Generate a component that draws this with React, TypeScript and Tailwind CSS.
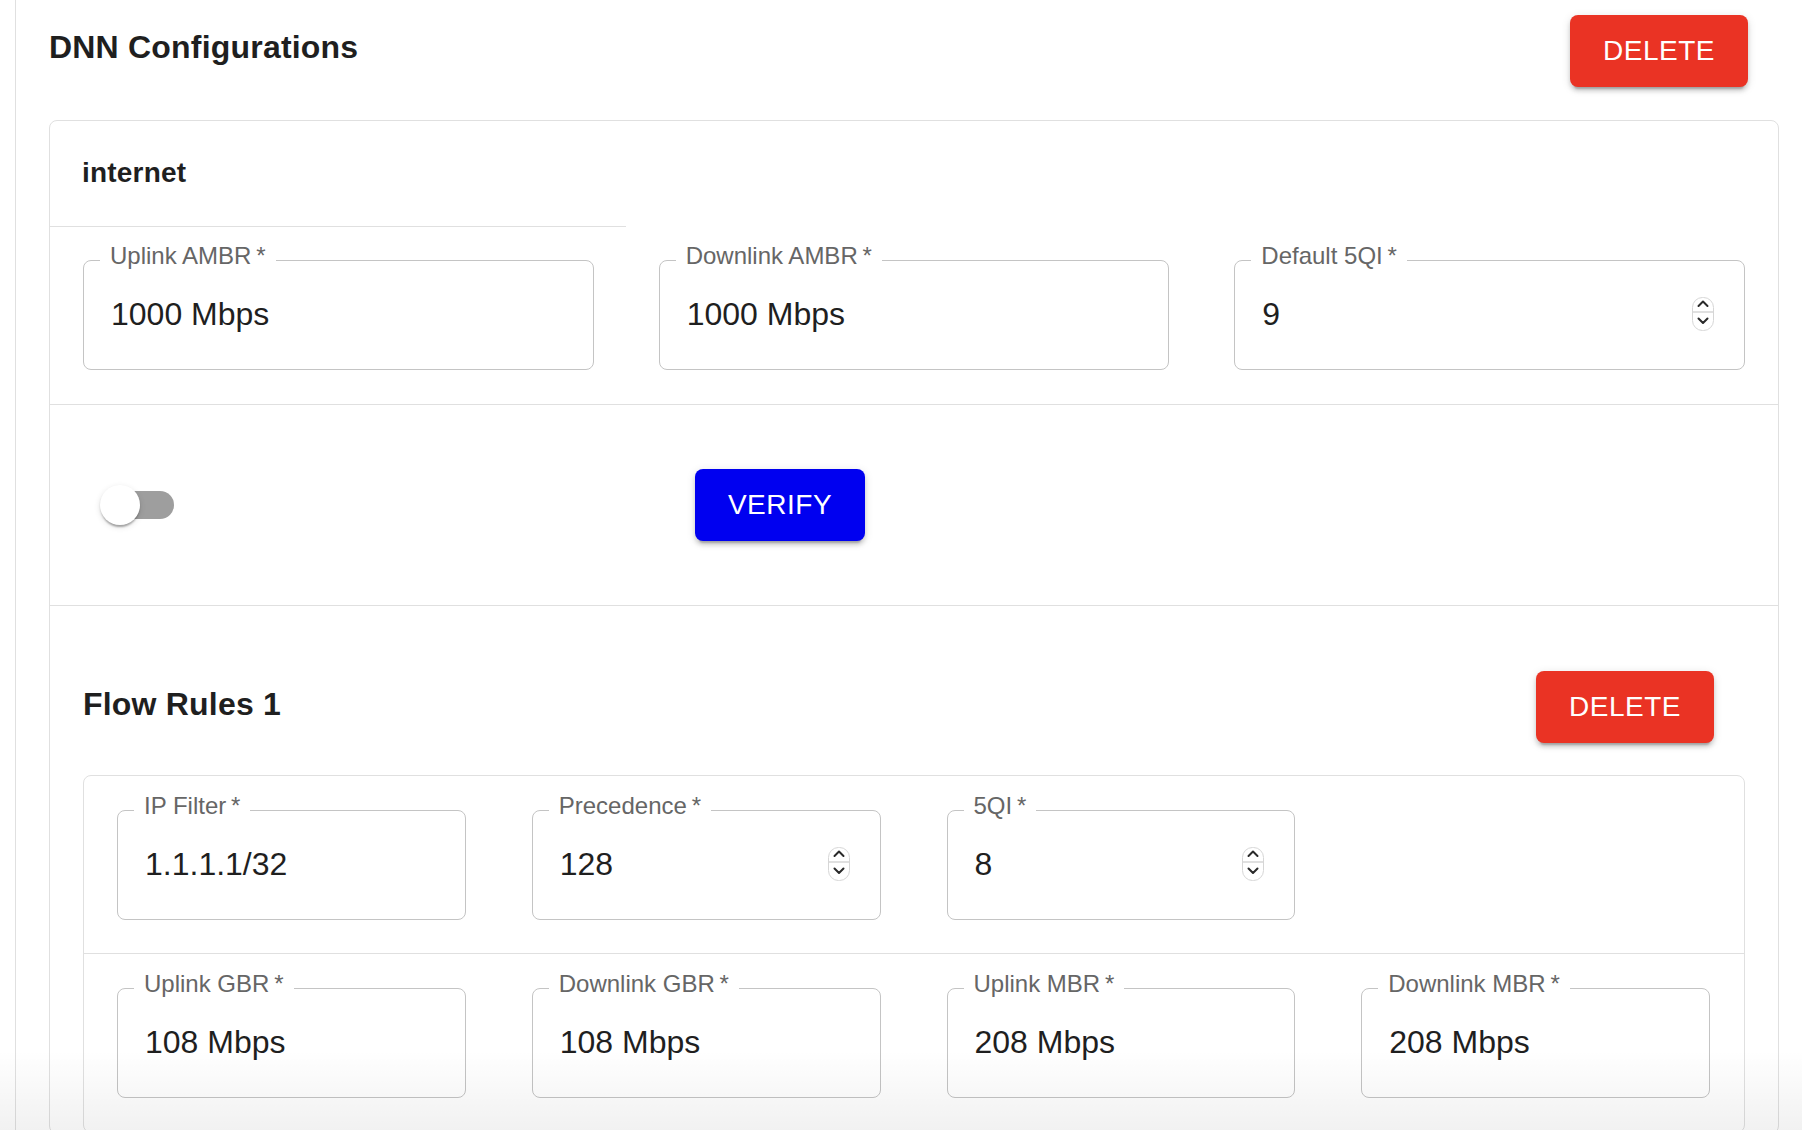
import React from "react";

const FONT = "font-['Liberation_Sans',Arial,Helvetica,sans-serif]";

function Spinner() {
  return (
    <svg width="22" height="34" viewBox="0 0 22 34" className="shrink-0">
      <rect x="0.5" y="0.5" width="21" height="33" rx="10" fill="#ffffff" stroke="#d6d6d6" />
      <line x1="1" y1="15" x2="21" y2="15" stroke="#d6d6d6" strokeWidth="1.5" />
      <path d="M6.5 9 L11 4.5 L15.5 9" stroke="#2a2a2a" strokeWidth="2" fill="none" strokeLinecap="round" strokeLinejoin="round" />
      <path d="M6.5 21.5 L11 26 L15.5 21.5" stroke="#2a2a2a" strokeWidth="2" fill="none" strokeLinecap="round" strokeLinejoin="round" />
    </svg>
  );
}

function Field({ label, value, spin = false }: { label: string; value: string; spin?: boolean }) {
  return (
    <div className="relative flex h-[110px] items-center justify-between rounded-[8px] border border-[#c4c4c4] pb-[2px] pl-[27px] pr-[30px]">
      <span className="absolute -top-[17px] left-[16px] bg-white px-[10px] text-[24px] leading-[24px] text-[#666666] whitespace-nowrap">
        {label}
        {"\u2009*"}
      </span>
      <span className="text-[32px] leading-[40px] text-[#1f1f1f]">{value}</span>
      {spin ? <Spinner /> : null}
    </div>
  );
}

const btnShadow =
  "shadow-[0_6px_2px_-4px_rgba(0,0,0,0.2),0_4px_4px_0_rgba(0,0,0,0.14),0_2px_10px_0_rgba(0,0,0,0.12)]";

function RedButton() {
  return (
    <button
      className={`flex h-[72px] w-[178px] items-center justify-center rounded-[8px] bg-[#ea3324] text-[28px] tracking-[0.5px] text-white ${btnShadow}`}
    >
      DELETE
    </button>
  );
}

export default function App() {
  return (
    <div className={`relative h-[1130px] w-full overflow-hidden bg-white ${FONT} text-[#1f1f1f]`}>
      <div className="ml-[15px] h-full border-l border-[#e0e0e0] pl-[33px] pr-[23px]">
        {/* header */}
        <div className="flex h-[120px] items-start justify-between pr-[31px]">
          <h1 className="mt-[27px] text-[32px] font-bold leading-[40px] tracking-[0.2px]">DNN Configurations</h1>
          <div className="mt-[15px]">
            <RedButton />
          </div>
        </div>

        {/* card */}
        <div className="rounded-[8px] border border-[#e0e0e0]">
          <div className="h-[106px] w-1/3 border-b border-[#e0e0e0] pl-[32px] pt-[32px]">
            <div className="text-[28px] font-bold leading-[40px] tracking-[0.2px]">internet</div>
          </div>

          <div className="grid grid-cols-3 gap-[65px] border-b border-[#e0e0e0] px-[33px] pb-[34px] pt-[33px]">
            <Field label="Uplink AMBR" value="1000 Mbps" />
            <Field label="Downlink AMBR" value="1000 Mbps" />
            <Field label="Default 5QI" value="9" spin />
          </div>

          <div className="flex h-[201px] items-center border-b border-[#e0e0e0] pl-[32px]">
            <div className="relative h-[76px] w-[116px] shrink-0">
              <div className="absolute left-[24px] top-[24px] h-[28px] w-[68px] rounded-full bg-[#9e9e9e]" />
              <div className="absolute left-[18px] top-[18px] h-[40px] w-[40px] rounded-full bg-white shadow-[0_4px_2px_-2px_rgba(0,0,0,0.2),0_2px_2px_0_rgba(0,0,0,0.14),0_2px_6px_0_rgba(0,0,0,0.12)]" />
            </div>
            <button
              className={`ml-[497px] flex h-[72px] w-[170px] items-center justify-center rounded-[8px] bg-[#0000f0] text-[28px] tracking-[0.5px] text-white ${btnShadow}`}
            >
              VERIFY
            </button>
          </div>

          {/* flow rules */}
          <div className="flex items-start justify-between pb-[32px] pl-[33px] pr-[64px] pt-[65px]">
            <h2 className="mt-[13px] text-[32px] font-bold leading-[40px] tracking-[0.2px]">Flow Rules 1</h2>
            <RedButton />
          </div>

          <div className="mx-[33px] rounded-[8px] border border-[#e0e0e0]">
            <div className="grid grid-cols-4 gap-[66px] border-b border-[#e0e0e0] pb-[33px] pl-[33px] pr-[34px] pt-[34px]">
              <Field label="IP Filter" value="1.1.1.1/32" />
              <Field label="Precedence" value="128" spin />
              <Field label="5QI" value="8" spin />
              <div />
            </div>
            <div className="grid grid-cols-4 gap-[66px] pb-[34px] pl-[33px] pr-[34px] pt-[34px]">
              <Field label="Uplink GBR" value="108 Mbps" />
              <Field label="Downlink GBR" value="108 Mbps" />
              <Field label="Uplink MBR" value="208 Mbps" />
              <Field label="Downlink MBR" value="208 Mbps" />
            </div>
          </div>
        </div>
      </div>
      <div className="pointer-events-none absolute inset-x-0 bottom-0 h-[80px] bg-linear-to-b from-[rgba(0,0,0,0)] to-[rgba(0,0,0,0.055)]" />
    </div>
  );
}
